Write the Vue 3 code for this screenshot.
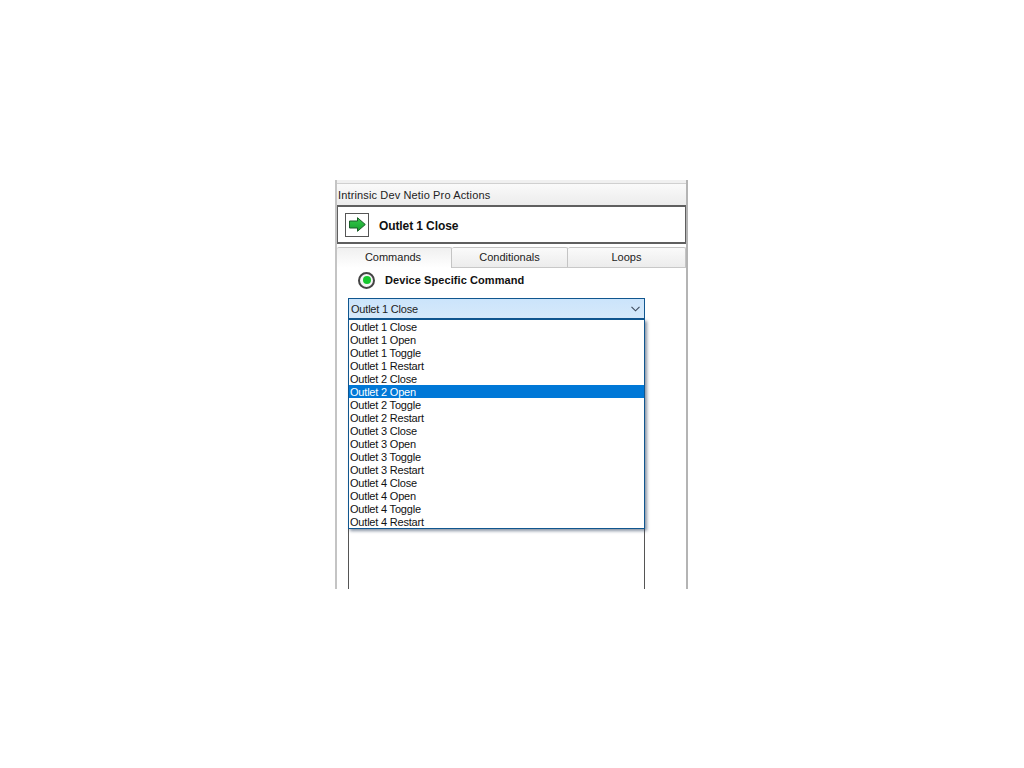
<script setup>
const tabs = ['Commands', 'Conditionals', 'Loops']
const items = []
for (const n of [1, 2, 3, 4]) {
  for (const a of ['Close', 'Open', 'Toggle', 'Restart']) {
    items.push(`Outlet ${n} ${a}`)
  }
}
</script>

<template>
  <div class="page">
    <div class="panel">
      <div class="strip"></div>
      <div class="head">Intrinsic Dev Netio Pro Actions</div>
      <div class="title">
        <div class="iconbox">
          <svg width="17" height="15" viewBox="0 0 17 15">
            <defs>
              <linearGradient id="arrowFill" x1="0" y1="0" x2="0" y2="1">
                <stop offset="0" stop-color="#35c94a" />
                <stop offset="1" stop-color="#16a02e" />
              </linearGradient>
            </defs>
            <path d="M0.5 4 H8.5 V0.7 L16.3 7.5 L8.5 14.3 V11 H0.5 Z" fill="url(#arrowFill)" stroke="#1a5c28" stroke-width="1" />
          </svg>
        </div>
        <span class="title-text">Outlet 1 Close</span>
      </div>
      <div class="tabs">
        <div v-for="(t, i) in tabs" :key="t" class="tab" :class="{ active: i === 0 }">{{ t }}</div>
      </div>
      <div class="body">
        <div class="radio-row">
          <span class="radio"><span class="dot"></span></span>
          <span class="radio-label">Device Specific Command</span>
        </div>
        <div class="combo-wrap">
          <div class="combo">
            <span>Outlet 1 Close</span>
            <svg width="9" height="6" viewBox="0 0 9 6"><path d="M0.5 0.8 L4.5 4.8 L8.5 0.8" fill="none" stroke="#3c4a5c" stroke-width="1.1" /></svg>
          </div>
          <div class="well"></div>
          <ul class="menu">
            <li v-for="(it, i) in items" :key="it" :class="{ sel: i === 5 }">{{ it }}</li>
          </ul>
        </div>
      </div>
    </div>
  </div>
</template>

<style scoped>
.page {
  width: 1024px;
  height: 768px;
  background: #fff;
  padding: 180px 0 0 335px;
  box-sizing: border-box;
  font-family: "Liberation Sans", Arial, sans-serif;
  color: #111;
}
.panel {
  width: 353px;
  height: 409px;
  box-sizing: border-box;
  border-left: 2px solid #c4c4c4;
  border-right: 2px solid #b4b4b4;
  display: flex;
  flex-direction: column;
}
.strip {
  height: 3px;
  background: #f0f0f0;
}
.head {
  height: 22px;
  box-sizing: border-box;
  padding-left: 1px;
  line-height: 22px;
  font-size: 11px;
  letter-spacing: 0.14px;
  color: #222;
  background: linear-gradient(#fafafa, #ececec);
  border-top: 1px solid #d0d0d0;
}
.title {
  height: 39px;
  box-sizing: border-box;
  border: 2px solid #5f5f5f;
  border-width: 2px 1px 2px 1px;
  display: flex;
  align-items: center;
  gap: 10px;
  padding-left: 7px;
  background: #fff;
}
.iconbox {
  width: 24px;
  height: 24px;
  box-sizing: border-box;
  border: 1px solid #555;
  display: flex;
  align-items: center;
  justify-content: center;
  background: #fff;
}
.title-text {
  font-size: 12px;
  font-weight: bold;
  letter-spacing: -0.1px;
  padding-top: 2px;
}
.tabs {
  margin-top: 3px;
  height: 20px;
  display: flex;
  border-bottom: 1px solid #c8c8c8;
  box-sizing: content-box;
}
.tab {
  width: 116px;
  height: 20px;
  box-sizing: border-box;
  text-align: center;
  font-size: 11px;
  line-height: 19px;
  color: #222;
  background: linear-gradient(#fafafa, #ececec);
  border: 1px solid #c4c4c4;
  border-left: 0;
  border-bottom: 0;
  border-radius: 2px 2px 0 0;
}
.tab:first-child {
  width: 115px;
  padding-right: 2px;
}
.tab:last-child {
  flex: 1;
}
.tab.active {
  background: linear-gradient(#f0f0f0, #fff);
  height: 21px;
  position: relative;
  z-index: 1;
}
.body {
  flex: 1;
  min-height: 0;
  display: flex;
  flex-direction: column;
  background: #fff;
}
.radio-row {
  display: flex;
  align-items: center;
  gap: 10px;
  height: 24px;
  margin-left: 21px;
}
.radio {
  width: 17px;
  height: 17px;
  box-sizing: border-box;
  border-radius: 50%;
  border: 2px solid #444;
  background: #f4f4f4;
  display: flex;
  align-items: center;
  justify-content: center;
}
.dot {
  width: 8px;
  height: 8px;
  border-radius: 50%;
  background: #16c72e;
}
.radio-label {
  font-size: 11px;
  font-weight: bold;
  letter-spacing: 0.08px;
}
.combo-wrap {
  position: relative;
  margin: 6px 0 0 11px;
  width: 297px;
  flex: 1;
  min-height: 0;
  display: flex;
  flex-direction: column;
}
.combo {
  height: 22px;
  flex: none;
  box-sizing: border-box;
  border: 1px solid #10568f;
  border-bottom-width: 2px;
  background: linear-gradient(#cbe4fb, #d6e9fa);
  display: flex;
  align-items: center;
  justify-content: space-between;
  padding: 0 4px 0 2px;
  font-size: 11px;
  letter-spacing: -0.2px;
  color: #222;
}
.well {
  flex: 1;
  box-sizing: border-box;
  border-left: 1px solid #555;
  border-right: 1px solid #555;
}
.menu {
  position: absolute;
  left: 0;
  top: 21px;
  width: 297px;
  height: 210px;
  box-sizing: border-box;
  margin: 0;
  padding: 0;
  list-style: none;
  background: #fff;
  border: 1px solid #10568f;
  box-shadow: 2px 2px 3px rgba(40, 60, 90, 0.55);
  font-size: 11px;
}
.menu li {
  height: 13px;
  line-height: 14px;
  padding-left: 1px;
  letter-spacing: -0.2px;
  color: #111;
  white-space: nowrap;
}
.menu li.sel {
  background: #0078d7;
  color: #fff;
}
</style>
